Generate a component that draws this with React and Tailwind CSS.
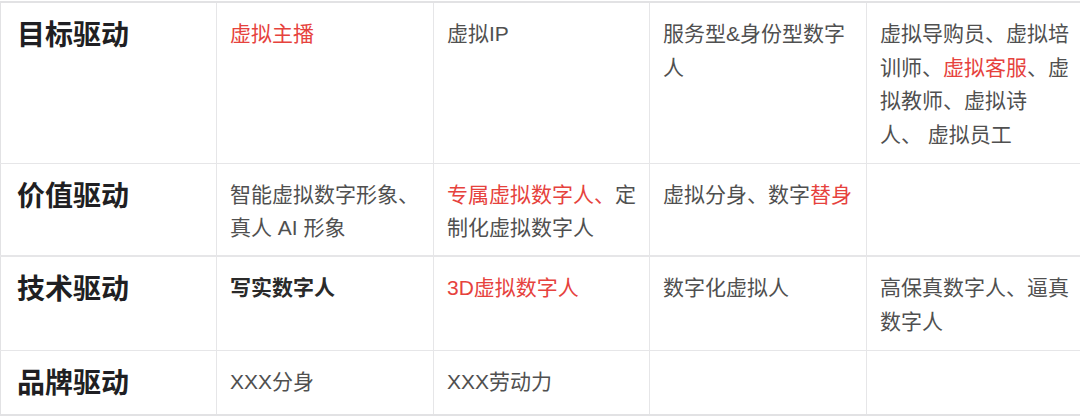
import React from 'react';

const red = 'text-[#e6423d]';

const ROWS = [
    {
        title: '目标驱动',
        h: 'h-[161px]',
        cells: [
            <span className={red}>虚拟主播</span>,
            <span>虚拟IP</span>,
            <span>服务型&amp;身份型数字<br />人</span>,
            <span>
                虚拟导购员、虚拟培<br />训师、<span className={red}>虚拟客服</span>、虚<br />拟教师、虚拟诗<br />人、 虚拟员工
            </span>,
        ],
    },
    {
        title: '价值驱动',
        h: 'h-[93px]',
        cells: [
            <span>智能虚拟数字形象、<br />真人 AI 形象</span>,
            <span><span className={red}>专属虚拟数字人、</span>定<br />制化虚拟数字人</span>,
            <span>虚拟分身、数字<span className={red}>替身</span></span>,
            null,
        ],
    },
    {
        title: '技术驱动',
        h: 'h-[94px]',
        cells: [
            <span className="font-bold text-[#2a2a2a]">写实数字人</span>,
            <span className={red}>3D虚拟数字人</span>,
            <span>数字化虚拟人</span>,
            <span>高保真数字人、逼真<br />数字人</span>,
        ],
    },
    {
        title: '品牌驱动',
        h: 'h-[65px]',
        cells: [
            <span>XXX分身</span>,
            <span>XXX劳动力</span>,
            null,
            null,
        ],
    },
];

const App = () => {
    return (
        <div className="w-[1080px] h-[419px] overflow-hidden bg-white pt-px" style={{ fontFamily: '"Liberation Sans", "Noto Sans CJK SC", sans-serif' }}>
            <table className="table-fixed border-collapse w-[1084px] border-t-2 border-b-2 border-l border-[#e2e2e4]">
                <colgroup>
                    <col className="w-[216px]" />
                    <col className="w-[217px]" />
                    <col className="w-[216px]" />
                    <col className="w-[217px]" />
                    <col className="w-[218px]" />
                </colgroup>
                <tbody>
                    {ROWS.map((row, i) => (
                        <tr key={row.title} className={`${row.h} ${i === 1 ? 'border-b-2' : 'border-b'} border-[#e6e6e8]`}>
                            <td className="align-top pl-[16px] pr-3 pt-[13px] border-r border-[#e6e6e8]">
                                <div className="text-[28px] leading-[40px] font-bold text-[#1f1f23]">{row.title}</div>
                            </td>
                            {row.cells.map((c, j) => (
                                <td key={j} className="align-top px-[13px] pt-[14px] border-r border-[#e6e6e8] text-[21px] leading-[33.5px] text-[#505050] whitespace-nowrap">
                                    {c}
                                </td>
                            ))}
                        </tr>
                    ))}
                </tbody>
            </table>
        </div>
    );
};

export default App;
